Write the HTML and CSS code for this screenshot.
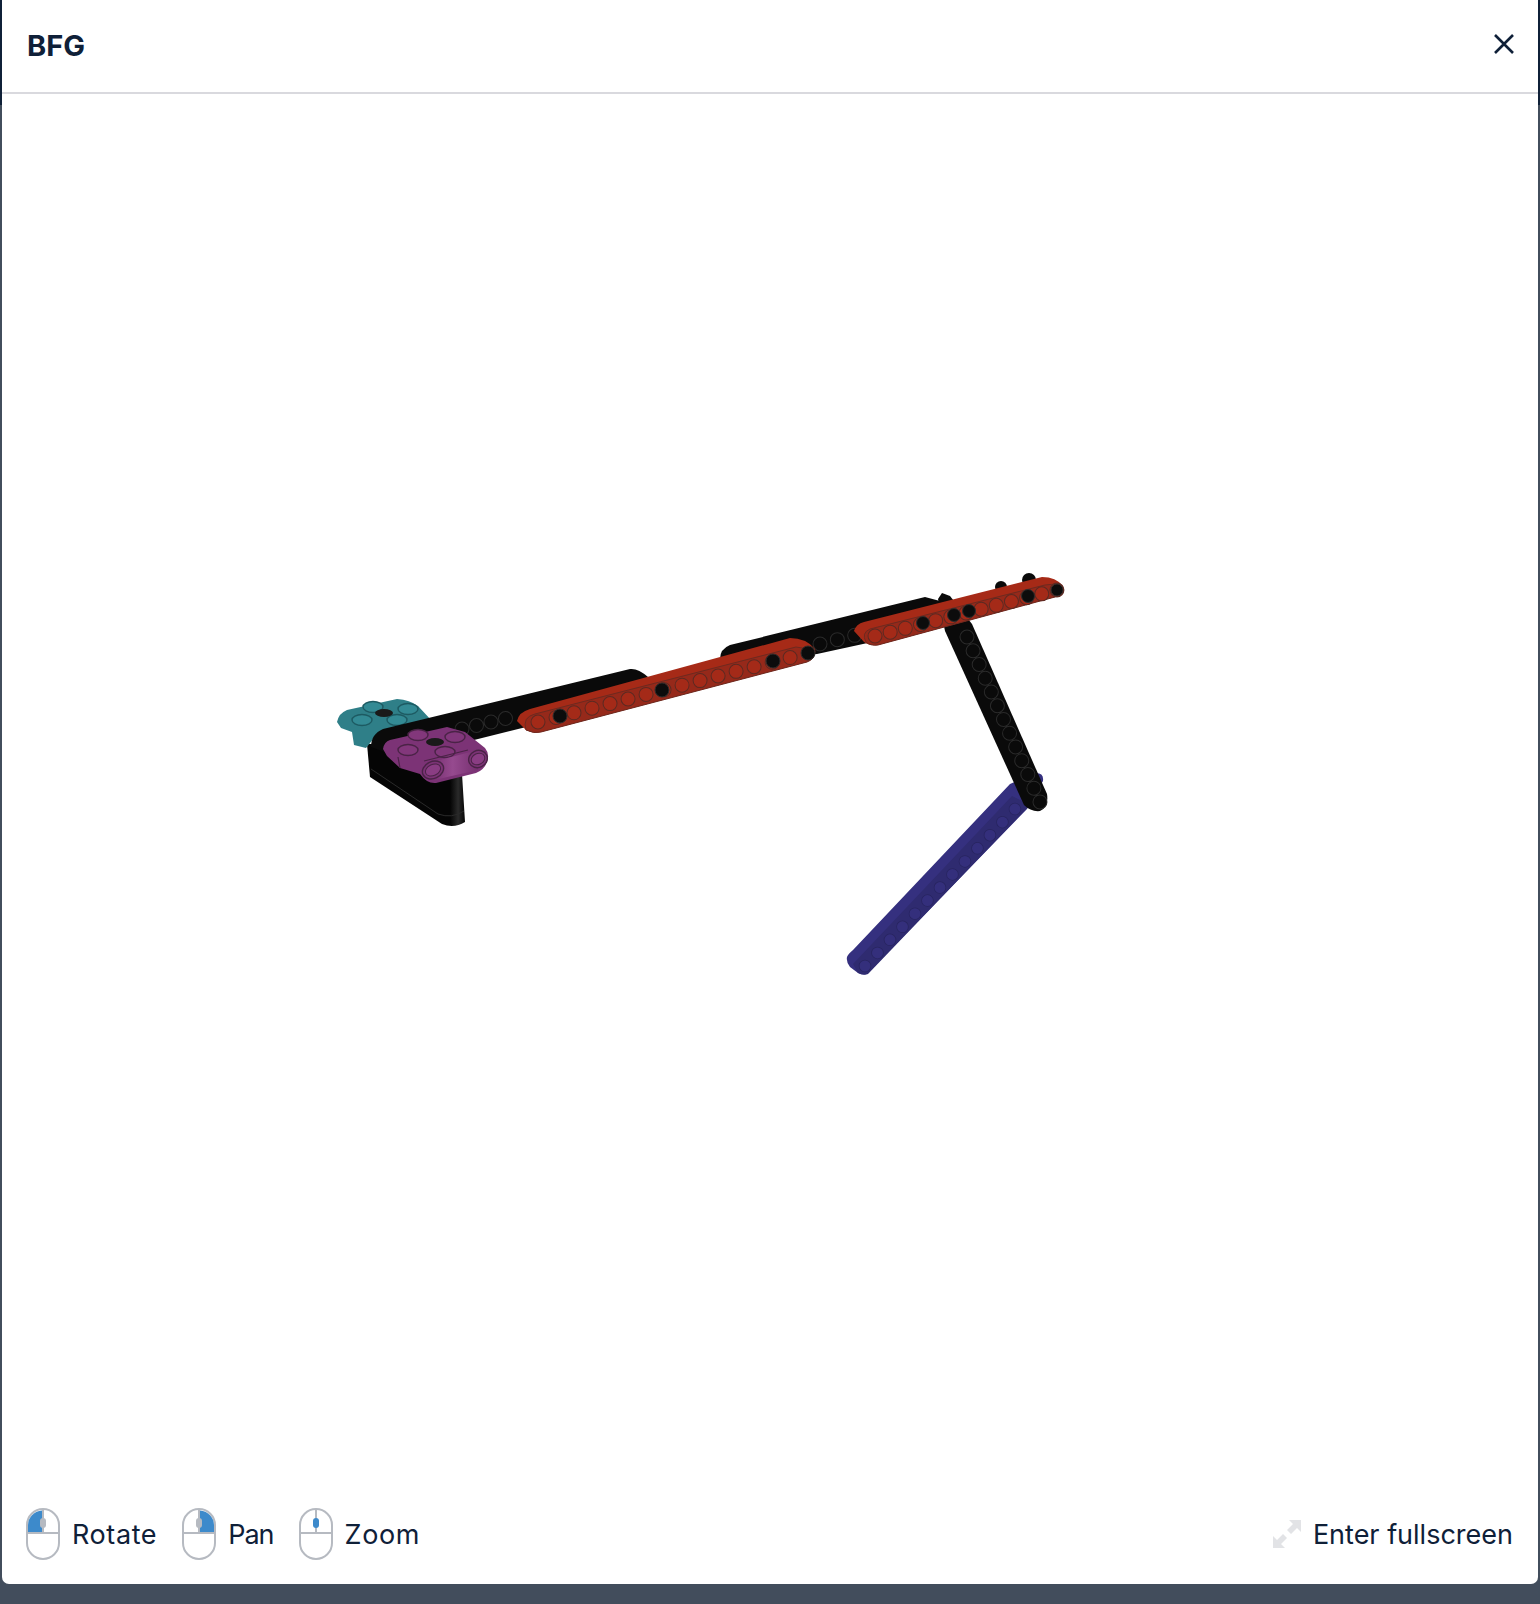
FILE: index.html
```html
<!DOCTYPE html>
<html lang="en">
<head>
<meta charset="utf-8">
<title>BFG</title>
<link rel="stylesheet" href="styles.css">
</head>
<body>
<section class="modal">
  <header class="modal-head">
    <h1 class="modal-title">BFG</h1>
    <button class="close" aria-label="Close">
      <svg width="22" height="22" viewBox="0 0 22 22"><path d="M2 2 20 20M20 2 2 20" class="close-x"/></svg>
    </button>
  </header>
  <div class="viewer">
    <svg class="model" viewBox="2 95 1536 1393" preserveAspectRatio="xMidYMin meet">
      <defs>
        <linearGradient id="tube" x1="0" y1="0" x2="1" y2="0">
          <stop offset="0" stop-color="#763070"/>
          <stop offset=".45" stop-color="#964a8f"/>
          <stop offset="1" stop-color="#763070"/>
        </linearGradient>
        <linearGradient id="bracket" x1="0" y1="0" x2="1" y2="0">
          <stop offset="0" stop-color="#050505"/>
          <stop offset=".85" stop-color="#050505"/>
          <stop offset=".93" stop-color="#2a2a2a"/>
          <stop offset="1" stop-color="#050505"/>
        </linearGradient>
      </defs>
      <!-- blue beam -->
      <path class="blue-top" d="M847 958Q848 955 853 951L1010 785 1036 774Q1044 774 1043 782L1027 810 868 974Q864 977 858 974L850 968Q846 963 847 958Z"/>
      <path class="blue-side" d="M853 965 1012 797 1030 806 868 975Q864 977 858 974Z"/>
      <line class="hole-ring hole-ring-blue" x1="865" y1="967" x2="1015" y2="810" pathLength="1"/>
      <line class="hole-fill hole-blue" x1="865" y1="967" x2="1015" y2="810" pathLength="1"/>

      <!-- upright black beam -->
      <path class="black" d="M942 594 950 597 972 625 1047 795Q1049 808 1040 812 1031 813 1024 806L945 632 938 600Z"/>
      <line class="hole-ring hole-ring-black" x1="967" y1="638" x2="1040" y2="803" pathLength="1"/>
      <line class="hole-fill hole-black" x1="967" y1="638" x2="1040" y2="803" pathLength="1"/>

      <!-- pins behind the far red beam -->
      <circle class="black" cx="1001" cy="588" r="6"/>
      <circle class="black" cx="1029" cy="581" r="7"/>

      <!-- second black beam -->
      <path class="black" d="M720 660Q720 650 730 646L925 598 940 602 955 625 817 655 730 665Z"/>
      <line class="hole-ring hole-ring-black hole-sparse" x1="820" y1="645" x2="872" y2="632" pathLength="1"/>
      <line class="hole-fill hole-black hole-sparse" x1="820" y1="645" x2="872" y2="632" pathLength="1"/>

      <!-- black bracket under the purple connector -->
      <path class="bracket" d="M367 745 370 778 442 825Q454 830 465 823L462 775 440 745Z"/>
      <path class="plate-line" d="M371 770 438 815Q452 820 464 812"/>

      <!-- teal connector -->
      <path class="teal" d="M337 723Q339 714 347 711L397 700Q410 701 418 707L432 722 378 734 366 749 354 746 352 733 341 729Z"/>
      <g class="teal-holes">
        <ellipse cx="373" cy="708" rx="10" ry="5.5"/>
        <ellipse cx="408" cy="710" rx="10" ry="5.5"/>
        <ellipse cx="362" cy="721" rx="10" ry="5.5"/>
        <ellipse cx="397" cy="721" rx="10" ry="5.5"/>
      </g>
      <ellipse class="pin" cx="384" cy="714" rx="9" ry="4"/>

      <!-- long black beam -->
      <path class="black" d="M371 748Q371 735 383 730L630 670Q638 669 648 678L640 700 470 742 390 755Z"/>
      <line class="hole-ring hole-ring-black hole-wide" x1="462" y1="730" x2="520" y2="716" pathLength="1"/>
      <line class="hole-fill hole-black hole-wide" x1="462" y1="730" x2="520" y2="716" pathLength="1"/>

      <!-- first red beam -->
      <path class="red-top" d="M517 722Q519 713 530 710L790 639Q806 639 815 650 817 658 807 663L541 733Q534 735 526 731Z"/>
      <path class="red-side" d="M526 731Q522 718 535 715L796 648Q812 650 814 654 815 660 807 663L541 733Q534 735 526 731Z"/>
      <line class="hole-ring hole-ring-red" x1="538" y1="723" x2="808" y2="654" pathLength="1"/>
      <line class="hole-fill hole-red" x1="538" y1="723" x2="808" y2="654" pathLength="1"/>
      <g class="pins">
        <circle cx="560" cy="717" r="7"/>
        <circle cx="662" cy="691" r="7"/>
        <circle cx="773" cy="662" r="7"/>
        <circle cx="808" cy="654" r="7"/>
      </g>

      <!-- second red beam -->
      <path class="red-top" d="M854 632Q856 625 864 623L1042 578Q1056 578 1063 587 1062 595 1055 598L878 646Q870 647 864 643Z"/>
      <path class="red-side" d="M866 643Q861 634 870 630L1045 586Q1060 584 1062 588 1062 595 1055 598L878 646Q870 647 866 643Z"/>
      <line class="hole-ring hole-ring-red hole-near" x1="875" y1="637" x2="1057" y2="591" pathLength="1"/>
      <line class="hole-fill hole-red hole-near" x1="875" y1="637" x2="1057" y2="591" pathLength="1"/>
      <g class="pins">
        <circle cx="923" cy="624" r="6.5"/>
        <circle cx="954" cy="616" r="6.5"/>
        <circle cx="969" cy="612" r="6.5"/>
        <circle cx="1028" cy="597" r="6.5"/>
        <circle cx="1057" cy="591" r="6"/>
      </g>

      <!-- purple connector -->
      <path class="purple" d="M383 750Q384 743 390 741L447 728 465 733 485 749Q490 755 487 763 484 771 476 774L436 784Q427 785 420 775L400 769 387 757Z"/>
      <g class="purple-holes">
        <ellipse cx="418" cy="736" rx="10" ry="5.5"/>
        <ellipse cx="455" cy="738" rx="10" ry="5.5"/>
        <ellipse cx="408" cy="751" rx="10" ry="5.5"/>
        <ellipse cx="445" cy="753" rx="10" ry="5.5"/>
      </g>
      <ellipse class="pin" cx="435" cy="743" rx="9" ry="4"/>
      <path class="purple-crease" d="M400 769 398 758M424 762 468 751"/>
      <path class="purple-bar" d="M432 763 478 751 478 771 434 781Z"/>
      <ellipse class="purple-front" cx="433" cy="771" rx="11" ry="8.5" transform="rotate(-25 433 771)"/>
      <ellipse class="purple-inner" cx="433" cy="771" rx="8" ry="5.5" transform="rotate(-25 433 771)"/>
      <ellipse class="purple-front" cx="478" cy="760" rx="9.5" ry="8.5" transform="rotate(-25 478 760)"/>
      <ellipse class="purple-inner" cx="478" cy="760" rx="7" ry="5.5" transform="rotate(-25 478 760)"/>
    </svg>
  </div>
  <footer class="modal-foot">
    <ul class="hints">
      <li class="hint">
        <svg class="mouse" viewBox="0 0 34 52"><rect class="m-body" x="1" y="1" width="32" height="50" rx="16"/><path class="m-fill" d="M16 2.5A15 15 0 0 0 2 17V25H16Z"/><path class="m-line" d="M1 25H33M17 1V25"/><rect class="m-wheel" x="14" y="10" width="6" height="10" rx="3"/></svg>
        <span>Rotate</span>
      </li>
      <li class="hint hint-tight">
        <svg class="mouse" viewBox="0 0 34 52"><rect class="m-body" x="1" y="1" width="32" height="50" rx="16"/><path class="m-fill" d="M18 2.5A15 15 0 0 1 32 17V25H18Z"/><path class="m-line" d="M1 25H33M17 1V25"/><rect class="m-wheel" x="14" y="10" width="6" height="10" rx="3"/></svg>
        <span>Pan</span>
      </li>
      <li class="hint">
        <svg class="mouse" viewBox="0 0 34 52"><rect class="m-body" x="1" y="1" width="32" height="50" rx="16"/><path class="m-line" d="M1 25H33M17 1V25"/><rect class="m-wheel-on" x="14" y="10" width="6" height="10" rx="3"/></svg>
        <span>Zoom</span>
      </li>
    </ul>
    <button class="fullscreen">
      <svg width="28" height="28" viewBox="0 0 28 28"><path class="fs-icon" d="M16 0H28V12L24 8 18 14 14 10 20 4ZM0 28V16L4 20 10 14 14 18 8 24 12 28Z"/></svg>
      <span>Enter fullscreen</span>
    </button>
  </footer>
</section>
</body>
</html>
```

FILE: styles.css
```css
* { box-sizing: border-box; }
html, body { height: 100%; }
body {
  margin: 0;
  background: linear-gradient(#0f2038 0 105px, #424d5c 105px);
  font-family: "Inter", "Lato", sans-serif;
  color: #0f2038;
  display: flex;
  flex-direction: column;
  align-items: center;
  overflow: hidden;
}
.modal {
  width: 1536px;
  height: 1584px;
  background: #fff;
  border-radius: 0 0 7px 7px;
  display: flex;
  flex-direction: column;
}
.modal-head {
  height: 94px;
  padding: 0 23px 4px 25px;
  border-bottom: 2px solid #d9d9de;
  display: flex;
  align-items: center;
  justify-content: space-between;
  flex: none;
}
.modal-title { margin: 2px 0 0; font-size: 29px; font-weight: 700; line-height: 1; }
.close { background: none; border: 0; padding: 0; display: flex; }
.close-x { stroke: #0f2038; stroke-width: 2.6; fill: none; }
.viewer { flex: 1; min-height: 0; }
.model { display: block; width: 100%; height: 100%; }
.modal-foot {
  height: 96px;
  padding: 0 25px 4px 24px;
  display: flex;
  align-items: center;
  justify-content: space-between;
  flex: none;
}
.hints { list-style: none; margin: 0; padding: 0; display: flex; gap: 25px; }
.hint { display: flex; align-items: center; gap: 12px; font-size: 27px; letter-spacing: .6px; }
.hint-tight { letter-spacing: -1px; }
.mouse { width: 34px; height: 52px; display: block; }
.m-body { fill: #fff; stroke: #b6bac1; stroke-width: 2; }
.m-line { stroke: #b6bac1; stroke-width: 2; fill: none; }
.m-fill { fill: #3d8acb; }
.m-wheel { fill: #b6bac1; }
.m-wheel-on { fill: #3d8acb; }
.fullscreen {
  background: none;
  border: 0;
  padding: 0;
  display: flex;
  align-items: center;
  gap: 12px;
  font: inherit;
  font-size: 27px;
  color: inherit;
}
.fs-icon { fill: #e2e3e6; }

.black { fill: #0a0a0a; }
.bracket { fill: url(#bracket); }
.plate-line { fill: none; stroke: #2a2a2a; stroke-width: 1; }
.red-top { fill: #a62a17; }
.red-side { fill: #96291a; stroke: #6d2a20; stroke-width: 1; }
.blue-top { fill: #35307f; }
.blue-side { fill: #2f2b70; }
.teal { fill: #2f7f88; }
.purple { fill: #7c3376; }
.purple-bar { fill: url(#tube); }
.purple-crease { fill: none; stroke: #4a2346; stroke-width: 1.2; }
.purple-front { fill: #7c3376; stroke: #4a2346; stroke-width: 1.4; }
.purple-inner { fill: #8a3d83; stroke: #4a2346; stroke-width: 1; }
.teal-holes ellipse { fill: #338a94; stroke: #1d5a62; stroke-width: 1.4; }
.purple-holes ellipse { fill: #82377b; stroke: #4a2346; stroke-width: 1.4; }
.pin { fill: #1a1a1a; }
.pins circle { fill: #0c0c0c; stroke: #2d2d2d; stroke-width: 1; }
.hole-ring, .hole-fill { stroke-linecap: round; fill: none; stroke-dasharray: 0 .0833; }
.hole-ring { stroke-width: 15; }
.hole-fill { stroke-width: 13; }
.hole-wide { stroke-dasharray: 0 .25; }
.hole-sparse { stroke-dasharray: 0 .3333; }
.hole-ring-red { stroke: #5c2a22; stroke-dasharray: 0 .0667; }
.hole-ring-red.hole-near { stroke-dasharray: 0 .0833; }
.hole-red { stroke: #a42a18; stroke-dasharray: 0 .0667; }
.hole-red.hole-near { stroke-dasharray: 0 .0833; }
.hole-ring-blue { stroke: #282560; stroke-width: 12.5; }
.hole-blue { stroke: #342f7c; stroke-width: 11; }
.hole-ring-black { stroke: #2a2a2a; }
.hole-black { stroke: #0a0a0a; }
```
